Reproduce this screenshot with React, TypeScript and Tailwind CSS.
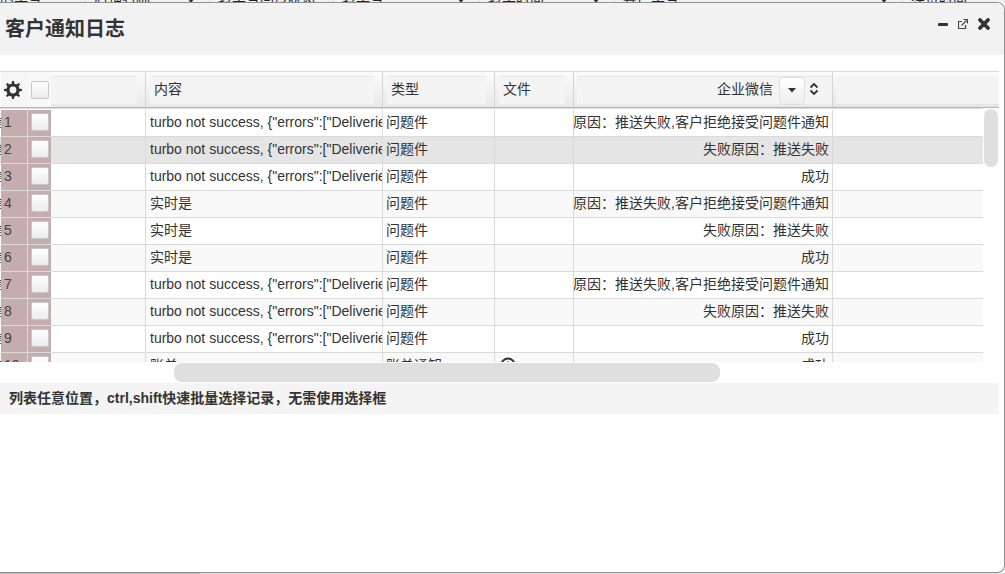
type LogRow = {
  id: number;
  content: string;
  type: string;
  hasFile?: boolean;
  wechat: string;
};

const CONTENT = 'turbo not success, {"errors":["Deliveries';
const REJECTED = "失败原因：推送失败,客户拒绝接受问题件通知";
const FAILED = "失败原因：推送失败";
const SUCCESS = "成功";

const rows: LogRow[] = [
  { id: 1, content: CONTENT, type: "问题件", wechat: REJECTED },
  { id: 2, content: CONTENT, type: "问题件", wechat: FAILED },
  { id: 3, content: CONTENT, type: "问题件", wechat: SUCCESS },
  { id: 4, content: "实时是", type: "问题件", wechat: REJECTED },
  { id: 5, content: "实时是", type: "问题件", wechat: FAILED },
  { id: 6, content: "实时是", type: "问题件", wechat: SUCCESS },
  { id: 7, content: CONTENT, type: "问题件", wechat: REJECTED },
  { id: 8, content: CONTENT, type: "问题件", wechat: FAILED },
  { id: 9, content: CONTENT, type: "问题件", wechat: SUCCESS },
  { id: 10, content: "账单", type: "账单通知", hasFile: true, wechat: SUCCESS },
];

const pageColumns = [
  { label: "的单号", width: "w-[86px]", arrow: false },
  { label: "店铺名称", width: "w-[124px]", arrow: true },
  { label: "转单号回传状态", width: "w-[124px]", arrow: false },
  { label: "转单号", width: "w-[146px]", arrow: true },
  { label: "转单时间", width: "w-[135px]", arrow: true },
  { label: "客户单号", width: "w-[288px]", arrow: true },
  { label: "续费时间", width: "flex-1", arrow: false },
];

function GearIcon() {
  return (
    <svg width="18" height="18" viewBox="0 0 18 18" fill="none" stroke="#333">
      <circle cx="9" cy="9" r="5" strokeWidth="3.2" />
      {[0, 45, 90, 135, 180, 225, 270, 315].map((angle) => (
        <path key={angle} d="M7.4 4L8 0h2l.6 4z" fill="#333" stroke="none" transform={`rotate(${angle} 9 9)`} />
      ))}
    </svg>
  );
}

function MinusIcon() {
  return (
    <svg width="10" height="12" viewBox="0 0 10 12">
      <rect x="0" y="5" width="10" height="3" rx="1" fill="#333" />
    </svg>
  );
}

function ExternalIcon() {
  return (
    <svg width="10" height="12" viewBox="0 0 10 12" fill="none" stroke="#444">
      <path d="M4 3.5H.5v7h7V7" strokeWidth="1.2" />
      <path d="M3.5 7.5L8.5 2.5M5.5 1.5H9.5V5.5" strokeWidth="1.2" />
    </svg>
  );
}

function CloseIcon() {
  return (
    <svg width="12" height="12" viewBox="0 0 12 12" stroke="#333" strokeWidth="3.6">
      <path d="M2 2l8 8M10 2l-8 8" strokeLinecap="square" />
    </svg>
  );
}

function FileIcon() {
  return (
    <svg width="16" height="16" viewBox="0 0 16 16" fill="none" stroke="#333" strokeWidth="2">
      <circle cx="8" cy="8" r="6.5" />
      <path d="M8 4.5v6M5.5 8L8 10.5 10.5 8" />
    </svg>
  );
}

function Columns() {
  return (
    <colgroup>
      <col className="w-px" />
      <col className="w-[27px]" />
      <col className="w-[23px]" />
      <col className="w-[95px]" />
      <col className="w-[237px]" />
      <col className="w-[112px]" />
      <col className="w-[79px]" />
      <col className="w-[259px]" />
      <col />
    </colgroup>
  );
}

function Checkbox({ label }: { label: string }) {
  return (
    <input
      type="checkbox"
      aria-label={label}
      className="mx-auto block size-[18px] appearance-none rounded-xs border border-[#c8c8c8] bg-linear-to-b from-white to-[#ececec]"
    />
  );
}

function HeaderCell({ label }: { label: string }) {
  return (
    <th className="border-r border-[#d4d4d4] bg-linear-to-b from-[#fbfbfb] to-[#e9e9e9] p-0 font-normal">
      <div
        className={`${
          label ? "ml-1" : ""
        } mr-2 h-7 overflow-hidden border-t border-[#e8e8e8] bg-[#f4f4f4] pl-1 text-left leading-6`}
      >
        {label}
      </div>
    </th>
  );
}

export default function App() {
  return (
    <div className="flex min-h-screen flex-col overflow-hidden bg-[#f2f2f2] font-['Liberation_Sans','Noto_Sans_CJK_SC',sans-serif] text-sm leading-5 text-[#333]">
      <div className="flex h-[2px] items-end overflow-hidden leading-4 text-[#222]">
        {pageColumns.map((column) => (
          <div
            key={column.label}
            className={`${column.width} -mb-1 flex shrink-0 items-end justify-between border-r border-[#d8d8d8] px-2 whitespace-nowrap first:px-0`}
          >
            <span>{column.label}</span>
            {column.arrow && (
              <svg width="8" height="6" viewBox="0 0 8 6" className="mr-1.5 mb-0.5">
                <path d="M0 0h8L4 5z" fill="#333" />
              </svg>
            )}
          </div>
        ))}
      </div>

      <section className="flex flex-1 flex-col overflow-hidden rounded-r-lg border-y border-r border-[#909090] bg-white">
        <header className="flex h-[52px] items-start justify-between bg-[#f2f2f2] pr-[14px] pl-[5px]">
          <h1 className="pt-3 text-xl leading-7 font-bold">客户通知日志</h1>
          <div className="flex gap-[10px] pt-[15px]">
            <button type="button" aria-label="最小化">
              <MinusIcon />
            </button>
            <button type="button" aria-label="新窗口打开">
              <ExternalIcon />
            </button>
            <button type="button" aria-label="关闭">
              <CloseIcon />
            </button>
          </div>
        </header>

        <div className="mr-[5px] pt-4">
          <table className="w-full table-fixed border-separate border-spacing-0 border-t border-b border-t-[#d9d9d9] border-b-[#b5b5b5]">
            <Columns />
            <thead>
              <tr className="h-[35px]">
                <td />
                <th className="bg-[#f6f6f6] p-0">
                  <button type="button" aria-label="设置" className="ml-[3px] block">
                    <GearIcon />
                  </button>
                </th>
                <th className="bg-[#f8f8f8] p-0">
                  <Checkbox label="全选" />
                </th>
                <HeaderCell label="" />
                <HeaderCell label="内容" />
                <HeaderCell label="类型" />
                <HeaderCell label="文件" />
                <th className="border-r border-[#d4d4d4] bg-linear-to-b from-[#fbfbfb] to-[#e9e9e9] p-0 font-normal">
                  <div className="ml-[3px] flex h-7 border-t border-[#e8e8e8] bg-[#f4f4f4]">
                    <span className="flex-1 pr-[6px] text-right leading-6">企业微信</span>
                    <button
                      type="button"
                      aria-label="列菜单"
                      className="flex h-7 w-[26px] items-center justify-center rounded border border-[#dedede] bg-linear-to-b from-white to-[#eee]"
                    >
                      <svg width="8" height="5" viewBox="0 0 8 5">
                        <path d="M0 0h8L4 4.5z" fill="#333" />
                      </svg>
                    </button>
                    <button type="button" aria-label="排序" className="flex h-6 w-[27px] items-center pl-1">
                      <svg width="10" height="12" viewBox="0 0 10 12" fill="none" stroke="#333" strokeWidth="1.8">
                        <path d="M1.5 4.5L5 1l3.5 3.5M1.5 7.5L5 11l3.5-3.5" />
                      </svg>
                    </button>
                  </div>
                </th>
                <th className="bg-linear-to-b from-[#fbfbfb] to-[#e5e5e5] p-0">
                  <div className="ml-[3px] h-7 bg-[#f4f4f4]" />
                </th>
              </tr>
            </thead>
          </table>

          <div className="flex h-[254px] overflow-hidden">
            <div className="min-w-0 flex-1 border-t border-[#ddd] pt-px">
              <table className="w-full table-fixed border-separate border-spacing-0 whitespace-nowrap">
                <Columns />
                <tbody>
                  {rows.map((row) => (
                    <tr
                      key={row.id}
                      className={`h-[27px] *:border-b *:border-[#dadada] *:pt-0 *:pb-0.5 ${
                        row.id === 2 ? "bg-[#e5e5e5]" : row.id % 2 === 0 ? "bg-[#f9f9f9]" : "bg-white"
                      }`}
                    >
                      <td className="px-0">
                        <div className="flex justify-center overflow-hidden">
                          <span className="shrink-0">信</span>
                        </div>
                      </td>
                      <td className="border-r bg-[#c5adad] pr-0 pl-[3px] text-[#444]">{row.id}</td>
                      <td className="bg-[#c5adad] px-0">
                        <Checkbox label={`选择第${row.id}行`} />
                      </td>
                      <td className="border-r px-0" />
                      <td className="overflow-hidden border-r pr-0 pl-1">{row.content}</td>
                      <td className="border-r pr-0 pl-[3px]">{row.type}</td>
                      <td className="border-r pr-0 pl-[5px]">{row.hasFile && <FileIcon />}</td>
                      <td className="border-r px-0">
                        <div className="flex justify-end overflow-hidden pr-[3px]">
                          <span className="shrink-0">{row.wechat}</span>
                        </div>
                      </td>
                      <td className="px-0" />
                    </tr>
                  ))}
                </tbody>
              </table>
            </div>
            <div className="w-4 px-px pt-px">
              <div className="h-[58px] rounded-full bg-[#dfdfdf]" />
            </div>
          </div>

          <div className="h-[21px] py-px">
            <div className="ml-[174px] h-[19px] w-[546px] rounded-lg bg-[#dfdfdf]" />
          </div>

          <p className="h-[31px] bg-[#f4f4f4] pl-[9px] leading-[30px] font-bold">
            列表任意位置，ctrl,shift快速批量选择记录，无需使用选择框
          </p>
        </div>
      </section>

      <div className="flex h-px bg-[#e0e0e0]">
        <div className="w-[200px] bg-[#b8b8b8]" />
      </div>
    </div>
  );
}
